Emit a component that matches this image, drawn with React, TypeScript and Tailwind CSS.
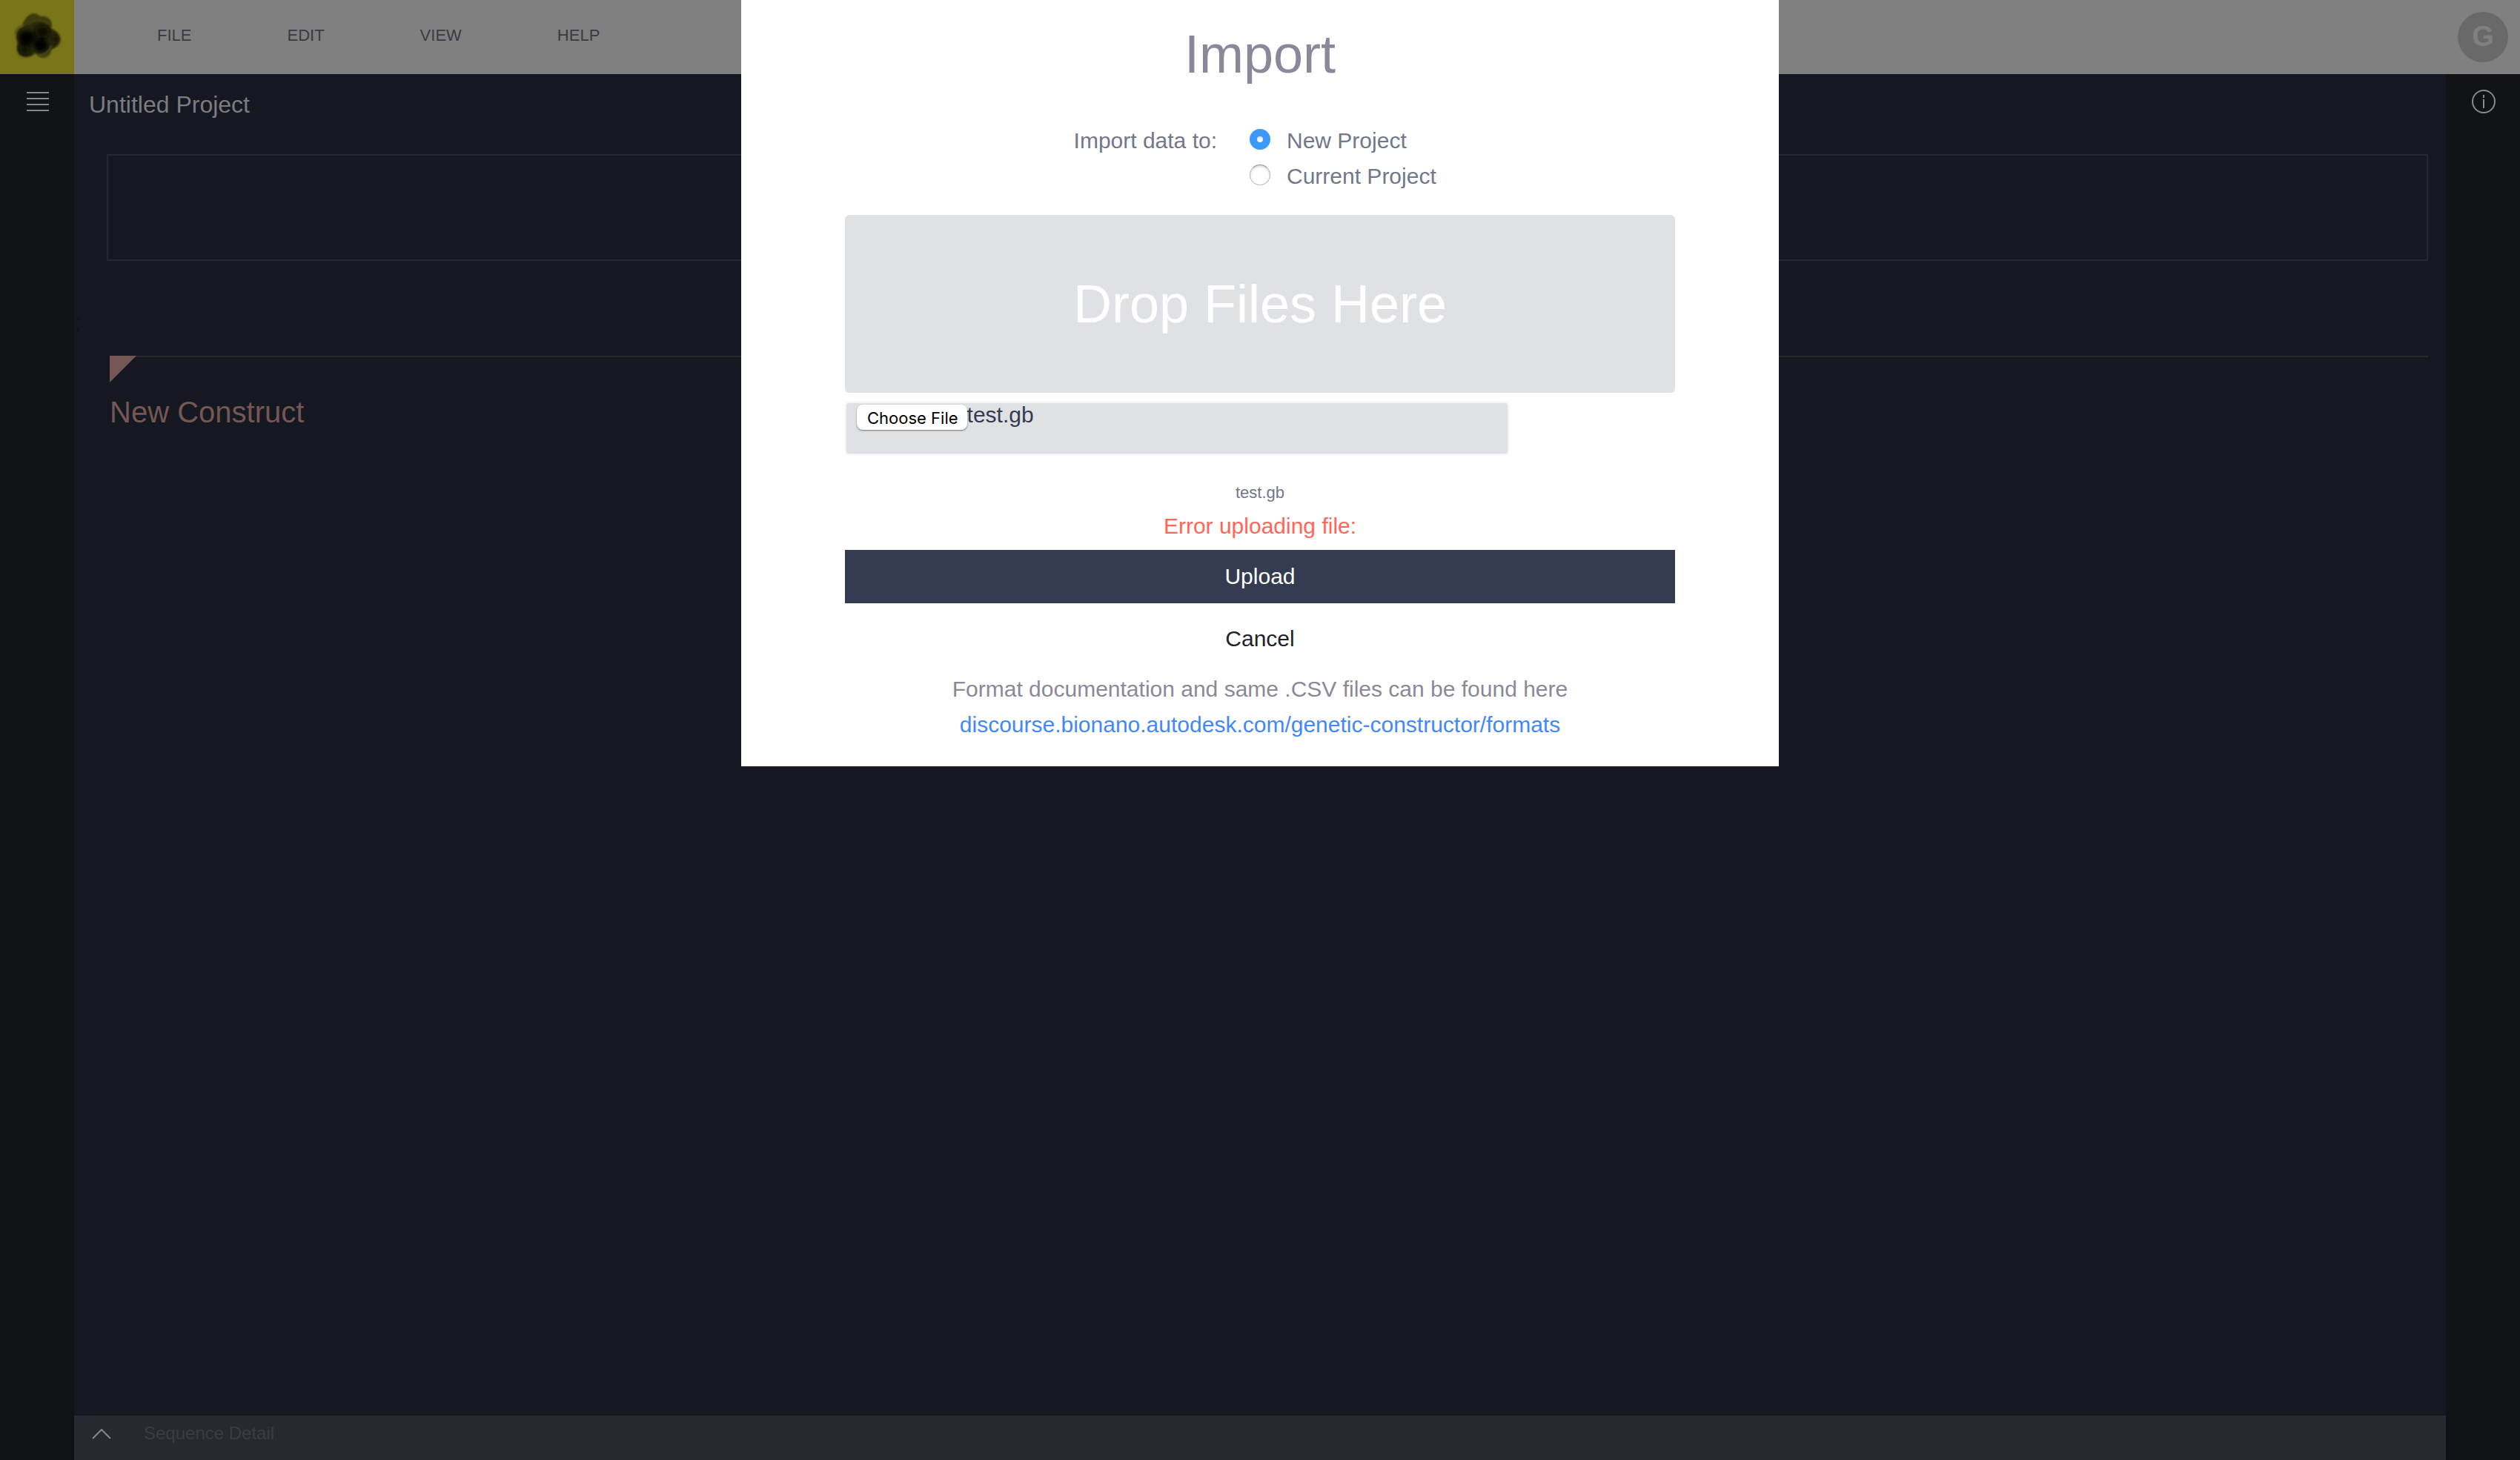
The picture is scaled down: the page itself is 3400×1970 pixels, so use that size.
import { useState } from "react";

const menus = ["FILE", "EDIT", "VIEW", "HELP"];

function Logo() {
  return (
    <svg viewBox="0 0 100 100" className="size-full" role="img" aria-label="Genetic Constructor">
      <defs>
        <filter id="edge" x="-10%" y="-10%" width="120%" height="120%">
          <feGaussianBlur stdDeviation="0.8" />
        </filter>
        <filter id="core" x="-40%" y="-40%" width="180%" height="180%">
          <feGaussianBlur stdDeviation="3" />
        </filter>
      </defs>
      <g filter="url(#edge)">
        <path
          d="M31 31C35 23 40 18 46 18C50 18 52 21 55 22C62 21 70 25 70 34C70 40 62 48 50 48C38 48 29 40 31 31Z"
          fill="#3c3a0b"
        />
        <path d="M48 72C52 79 62 81 68 73L69 64H48Z" fill="#47440e" />
        <path
          d="M24 40C29 35 35 36 40 32C48 27 62 27 68 38C74 40 81 46 81 53C81 60 75 65 69 67C66 74 56 76 47 72C43 77 33 79 27 74C22 70 22 62 24 58C22 52 21 44 24 40Z"
          fill="#2c2a07"
        />
      </g>
      <g filter="url(#core)">
        <ellipse cx="36" cy="51" rx="11" ry="10" fill="#000" />
        <ellipse cx="55" cy="61" rx="10" ry="9" fill="#000" />
        <ellipse cx="57" cy="43" rx="10" ry="9" fill="#0b0a01" />
        <ellipse cx="33" cy="67" rx="7" ry="7" fill="#080801" />
        <ellipse cx="75" cy="53" rx="4" ry="6" fill="#121103" />
      </g>
      <g filter="url(#edge)" fill="none" strokeLinecap="round">
        <path d="M20 46C21 39 27 35 33 33" stroke="#4b480f" strokeWidth="1.5" />
        <path d="M46 72C55 77 66 72 69 62" stroke="#625e14" strokeWidth="1.2" />
        <path d="M39 33C46 27 58 26 65 32" stroke="#4f4c10" strokeWidth="1.2" />
      </g>
    </svg>
  );
}

function Header() {
  return (
    <header className="flex h-[100px] items-center bg-[#808080]">
      <a href="#home" className="size-[100px] bg-[#7b7519]">
        <Logo />
      </a>
      <nav className="ml-28 flex gap-[129px] pb-1 text-[22px] leading-8 text-[#3a3b42]">
        {menus.map((m) => (
          <button key={m} type="button">
            {m}
          </button>
        ))}
      </nav>
      <button
        type="button"
        aria-label="Account"
        className="mr-4 ml-auto flex size-[68px] items-center justify-center rounded-full bg-[#696969] pb-0.5 text-[38px] leading-none font-bold text-[#808080]"
      >
        G
      </button>
    </header>
  );
}

function ImportDialog() {
  const [target, setTarget] = useState("new");
  const options = [
    { id: "new", label: "New Project" },
    { id: "current", label: "Current Project" },
  ];
  return (
    <div className="absolute inset-x-0 top-0 flex justify-center">
      <form
        role="dialog"
        aria-labelledby="import-title"
        className="flex w-[1400px] max-w-full flex-col items-center bg-white px-[140px] pt-6 pb-8 text-[30px] leading-[48px] text-[#72778a]"
      >
        <h1 id="import-title" className="text-[72px] leading-[98px] text-[#8b889a]">
          Import
        </h1>
        <div role="radiogroup" aria-labelledby="import-target" className="mt-11 flex w-full">
          <span id="import-target" className="w-[502px] text-right">
            Import data to:
          </span>
          <div className="ml-11 flex flex-col">
            {options.map((o) => (
              <label key={o.id} className="flex items-center gap-[22px]">
                <input
                  type="radio"
                  name="target"
                  checked={target === o.id}
                  onChange={() => setTarget(o.id)}
                  className="mb-1 size-7 appearance-none rounded-full border border-[#b8b8b8] border-t-[#8f8f8f] bg-white shadow-[inset_0_2px_3px_rgba(0,0,0,0.15)] checked:border-[10px] checked:border-[#3b99fc]"
                />
                {o.label}
              </label>
            ))}
          </div>
        </div>
        <div className="mt-7 flex h-60 w-full items-center justify-center rounded-md bg-[#e0e1e5] text-[72px] text-white">
          Drop Files Here
        </div>
        <div className="mt-3 flex h-[72px] w-4/5 items-start self-start rounded-md border-2 border-[#f4f4f5] bg-[#e0e1e5] pl-[14px] text-[#353b50]">
          <button
            type="button"
            className="mt-0.5 h-[34px] rounded-lg bg-white pt-0.5 pr-3 pl-[14px] font-[Inter] text-[22px] leading-8 text-black shadow-[0_1px_2px_rgba(0,0,0,0.5)]"
          >
            Choose File
          </button>
          <span className="leading-8">test.gb</span>
        </div>
        <p className="mt-9 text-[22px] leading-[30px]">test.gb</p>
        <p className="mt-1.5 text-[#ff6659]">Error uploading file:</p>
        <button type="button" className="mt-2 h-[72px] w-full bg-[#353b50] text-white">
          Upload
        </button>
        <button type="button" className="mt-6 text-[#1e222c]">
          Cancel
        </button>
        <p className="mt-5 text-[#8b889a]">Format documentation and same .CSV files can be found here</p>
        <a href="#formats" className="text-[#4387fd]">
          discourse.bionano.autodesk.com/genetic-constructor/formats
        </a>
      </form>
    </div>
  );
}

export default function App() {
  return (
    <div className="relative flex min-h-screen flex-col bg-[#151820] font-['Liberation_Sans',Arial,sans-serif]">
      <Header />
      <div className="flex flex-1">
        <aside className="flex w-[100px] flex-col items-center bg-[#111216] pt-6 pl-0.5">
          <button type="button" aria-label="Toggle inventory" className="flex w-[30px] flex-col gap-1.5">
            <span className="h-0.5 w-full bg-[#89898a]" />
            <span className="h-0.5 w-full bg-[#89898a]" />
            <span className="h-0.5 w-full bg-[#89898a]" />
            <span className="h-0.5 w-full bg-[#89898a]" />
          </button>
        </aside>
        <main className="flex flex-1 flex-col">
          <div className="flex-1 pr-6">
            <h2 className="ml-5 pt-5 text-[32px] leading-[42px] text-[#7c7c80]">Untitled Project</h2>
            <div className="mt-[46px] ml-11 h-36 border-2 border-[#242730]" />
            <p className="mt-[68px] ml-px h-[60px] text-[28px] leading-8 text-[#0f1218]">;</p>
            <section className="ml-12 border-t-2 border-[#27272d] text-[#745654]">
              <svg viewBox="0 0 36 36" className="-mt-0.5 size-9" aria-hidden="true">
                <path d="M0 0H36L0 36Z" fill="currentColor" />
              </svg>
              <h3 className="mt-4 text-[40px] leading-[48px]">New Construct</h3>
            </section>
          </div>
          <footer className="flex h-[60px] items-start bg-[#26292f] pt-2 text-[24px] leading-8 text-[#3b3c40]">
            <button type="button" aria-label="Expand" className="mt-2.5 ml-6">
              <svg viewBox="0 0 26 14" className="h-[14px] w-[26px]" fill="none" stroke="#88888a" strokeWidth="2">
                <path d="M1 13L13 1L25 13" />
              </svg>
            </button>
            <span className="ml-11">Sequence Detail</span>
          </footer>
        </main>
        <aside className="flex w-[100px] flex-col items-center bg-[#111216] pt-5">
          <button type="button" aria-label="Information">
            <svg viewBox="0 0 34 34" className="size-[34px]" fill="none" stroke="#89898a" strokeWidth="2">
              <circle cx="18" cy="17" r="15" />
              <path d="M18 8V12M18 14V26" />
            </svg>
          </button>
        </aside>
      </div>
      <ImportDialog />
    </div>
  );
}
